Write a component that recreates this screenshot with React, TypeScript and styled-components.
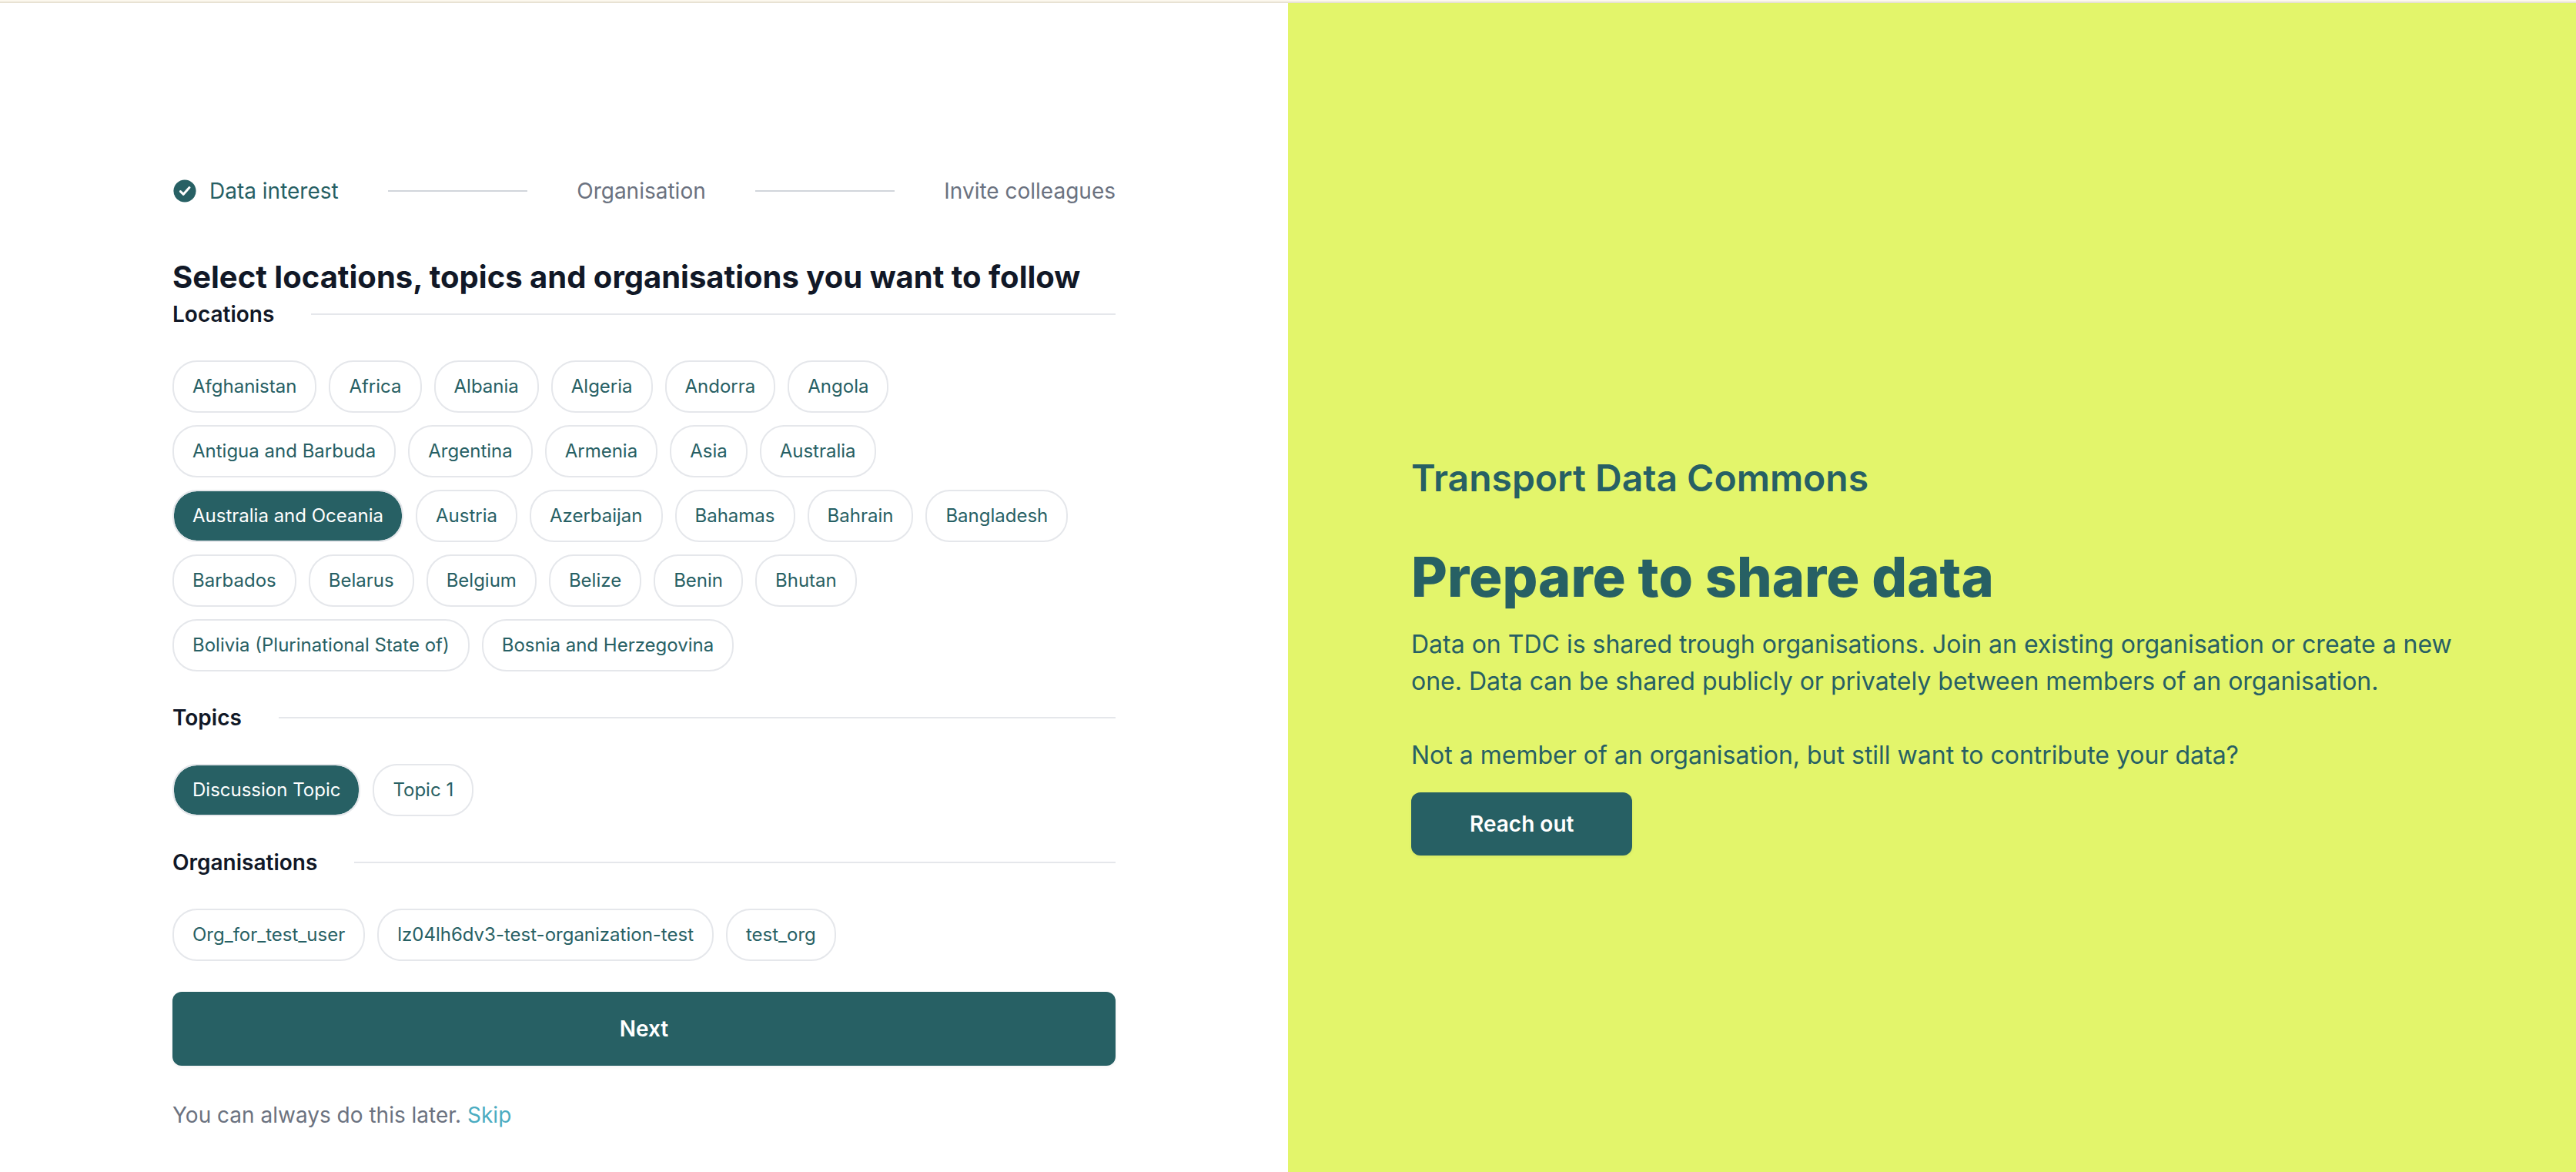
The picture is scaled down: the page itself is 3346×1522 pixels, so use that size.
import React, { useState } from "react";
import styled, { createGlobalStyle } from "styled-components";

const teal = "#276064";
const ink = "#111827";
const muted = "#6b7280";
const line = "#e5e7eb";

const GlobalStyle = createGlobalStyle`
  *, *::before, *::after { box-sizing: border-box; }
  body {
    margin: 0;
    background: #fff;
    color: ${ink};
    font-family: Inter, "Liberation Sans", sans-serif;
    -webkit-font-smoothing: antialiased;
  }
  h1, h2, h3, p, ol { margin: 0; padding: 0; }
`;

const Page = styled.div`
  display: flex;
  flex-direction: column;
  min-height: 100vh;
`;

const TopBar = styled.div`
  height: 4px;
  background: #fcf8ee;
  border-bottom: 2px solid #e8e2d3;
`;

const Columns = styled.main`
  flex: 1;
  display: grid;
  grid-template-columns: 1fr 1fr;
`;

const FormPanel = styled.form`
  padding: 224px 224px 40px;
`;

const Steps = styled.ol`
  display: flex;
  align-items: center;
  list-style: none;
  margin-bottom: 64px;
`;

const Step = styled.li<{ $active?: boolean; $grow?: boolean }>`
  display: flex;
  align-items: center;
  flex: ${(p) => (p.$grow ? "1 1 auto" : "0 0 auto")};
  font-size: 28px;
  line-height: 40px;
  color: ${(p) => (p.$active ? teal : muted)};

  &:not(:last-child)::after {
    content: "";
    flex: 1;
    height: 2px;
    margin: 0 64px;
    background: #d1d5db;
  }
`;

const StepIcon = styled.svg`
  width: 32px;
  height: 32px;
  margin-right: 16px;
`;

const Title = styled.h1`
  font-size: 40px;
  line-height: 56px;
  font-weight: 700;
`;

const Group = styled.section`
  margin-bottom: 40px;
`;

const GroupHead = styled.div`
  display: flex;
  align-items: center;
  gap: 48px;
  margin-bottom: 40px;

  &::after {
    content: "";
    flex: 1;
    height: 2px;
    background: ${line};
  }
`;

const GroupTitle = styled.h2`
  font-size: 28px;
  line-height: 40px;
  font-weight: 600;
`;

const Chips = styled.div`
  display: flex;
  flex-wrap: wrap;
  gap: 16px;
`;

const Chip = styled.button<{ $on: boolean }>`
  padding: 16px 24px;
  border: 2px solid ${line};
  border-radius: 32px;
  background: ${(p) => (p.$on ? teal : "#fff")};
  background-clip: padding-box;
  color: ${(p) => (p.$on ? "#fff" : teal)};
  font-family: inherit;
  font-size: 24px;
  line-height: 32px;
  font-weight: 400;
  cursor: pointer;
`;

const Button = styled.button<{ $wide?: boolean }>`
  width: ${(p) => (p.$wide ? "100%" : "auto")};
  padding: ${(p) => (p.$wide ? "28px 24px" : "21px 76px")};
  border: 0;
  border-radius: 12px;
  background: ${teal};
  box-shadow: 0 2px 4px rgba(0, 0, 0, 0.05);
  color: #fff;
  font-family: inherit;
  font-size: 28px;
  line-height: 40px;
  font-weight: 600;
  cursor: pointer;
`;

const Later = styled.p`
  margin-top: 44px;
  font-size: 28px;
  line-height: 40px;
  color: ${muted};
`;

const SkipLink = styled.a`
  color: #4bacc1;
  text-decoration: none;
`;

const Promo = styled.aside`
  display: flex;
  flex-direction: column;
  justify-content: center;
  align-items: flex-start;
  padding: 334px 160px 160px;
  background: #e3f56b;
  color: ${teal};
`;

const Brand = styled.p`
  margin-bottom: 56px;
  font-size: 48px;
  line-height: 64px;
  font-weight: 600;
`;

const PromoTitle = styled.h2`
  margin-bottom: 24px;
  font-size: 72px;
  line-height: 80px;
  font-weight: 800;
`;

const PromoText = styled.p`
  font-size: 32px;
  line-height: 48px;

  & + & {
    margin: 48px 0 24px;
  }
`;

const groups = [
  {
    title: "Locations",
    items: [
      "Afghanistan", "Africa", "Albania", "Algeria", "Andorra", "Angola",
      "Antigua and Barbuda", "Argentina", "Armenia", "Asia", "Australia",
      "Australia and Oceania", "Austria", "Azerbaijan", "Bahamas", "Bahrain", "Bangladesh",
      "Barbados", "Belarus", "Belgium", "Belize", "Benin", "Bhutan",
      "Bolivia (Plurinational State of)", "Bosnia and Herzegovina",
    ],
  },
  { title: "Topics", items: ["Discussion Topic", "Topic 1"] },
  { title: "Organisations", items: ["Org_for_test_user", "lz04lh6dv3-test-organization-test", "test_org"] },
];

export default function App() {
  const [selected, setSelected] = useState<string[]>(["Australia and Oceania", "Discussion Topic"]);
  const toggle = (item: string) =>
    setSelected((s) => (s.includes(item) ? s.filter((x) => x !== item) : [...s, item]));

  return (
    <Page>
      <GlobalStyle />
      <TopBar />
      <Columns>
        <FormPanel onSubmit={(e) => e.preventDefault()}>
          <Steps>
            <Step $active $grow>
              <StepIcon viewBox="0 0 32 32" aria-hidden="true">
                <circle cx="16" cy="16" r="14.6" fill={teal} />
                <path
                  d="M10.4 16.6 14.3 20.3 22 11.6"
                  fill="none"
                  stroke="#fff"
                  strokeWidth="3"
                  strokeLinecap="round"
                  strokeLinejoin="round"
                />
              </StepIcon>
              Data interest
            </Step>
            <Step $grow>Organisation</Step>
            <Step>Invite colleagues</Step>
          </Steps>
          <Title>Select locations, topics and organisations you want to follow</Title>
          {groups.map((g) => (
            <Group key={g.title}>
              <GroupHead>
                <GroupTitle>{g.title}</GroupTitle>
              </GroupHead>
              <Chips>
                {g.items.map((item) => (
                  <Chip
                    key={item}
                    type="button"
                    $on={selected.includes(item)}
                    aria-pressed={selected.includes(item)}
                    onClick={() => toggle(item)}
                  >
                    {item}
                  </Chip>
                ))}
              </Chips>
            </Group>
          ))}
          <Button $wide type="submit">Next</Button>
          <Later>
            You can always do this later. <SkipLink href="#skip">Skip</SkipLink>
          </Later>
        </FormPanel>
        <Promo>
          <Brand>Transport Data Commons</Brand>
          <PromoTitle>Prepare to share data</PromoTitle>
          <PromoText>
            Data on TDC is shared trough organisations. Join an existing organisation or create a new
            one. Data can be shared publicly or privately between members of an organisation.
          </PromoText>
          <PromoText>Not a member of an organisation, but still want to contribute your data?</PromoText>
          <Button type="button">Reach out</Button>
        </Promo>
      </Columns>
    </Page>
  );
}
